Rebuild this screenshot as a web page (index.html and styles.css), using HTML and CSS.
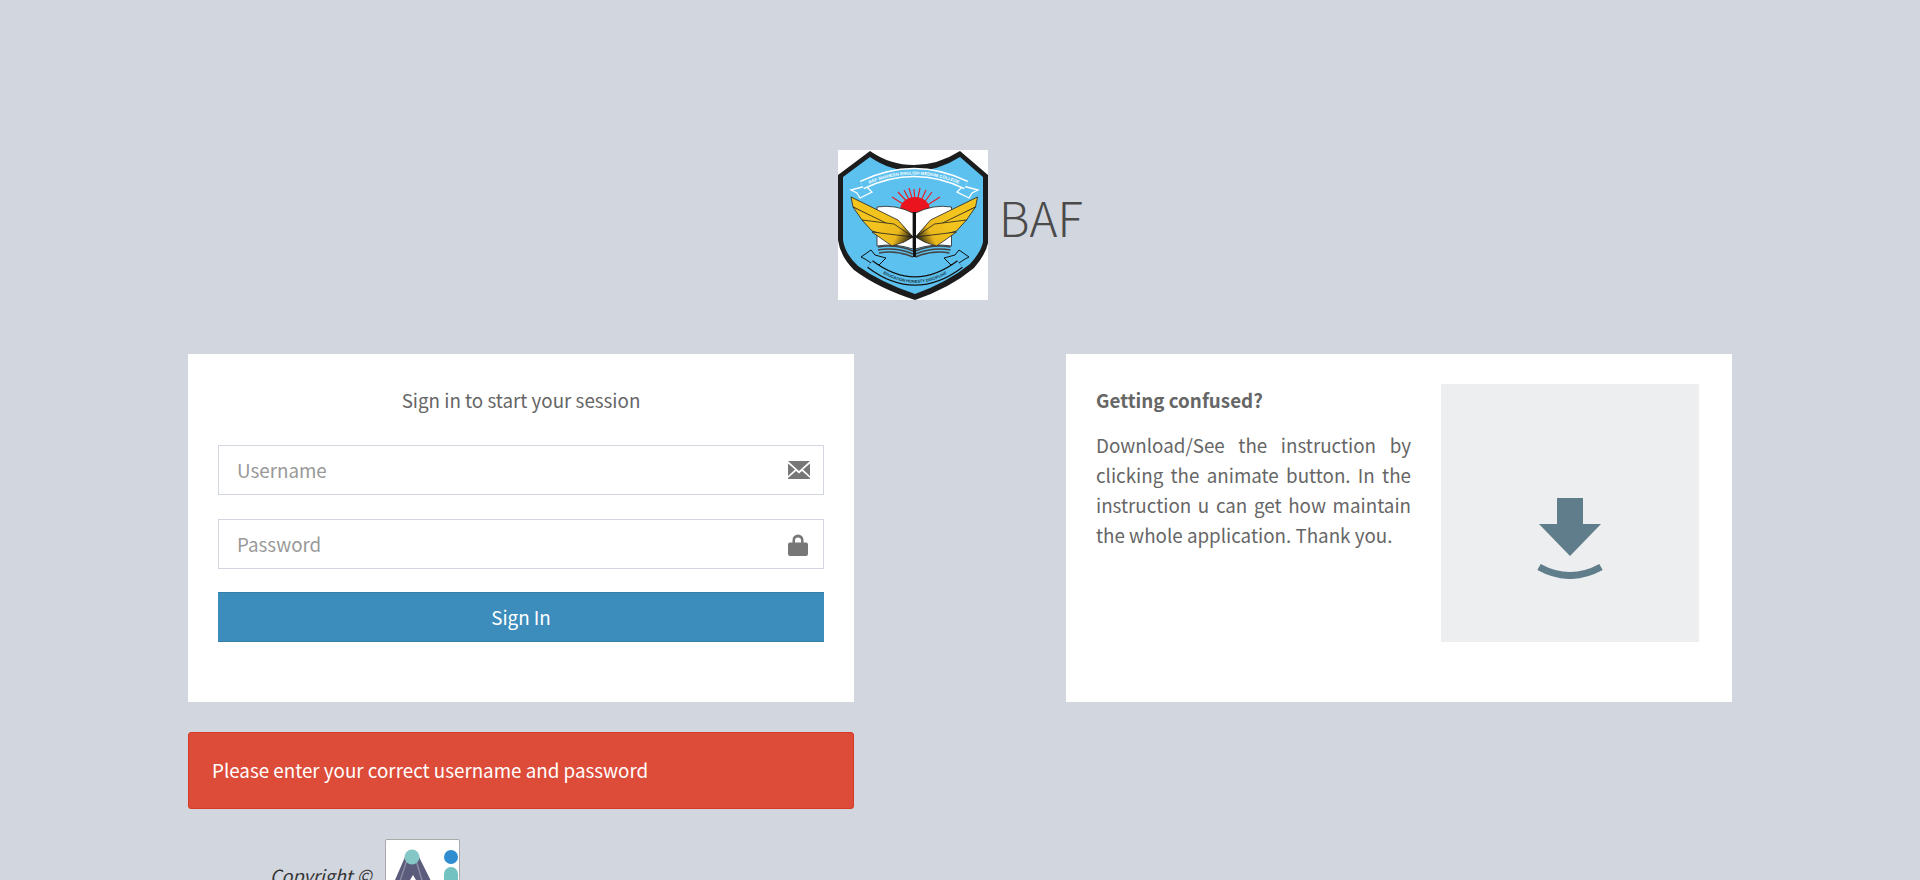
FILE: index.html
```html
<!DOCTYPE html>
<html lang="en">
<head>
<meta charset="utf-8">
<title>BAF Login</title>
<link rel="stylesheet" href="styles.css">
</head>
<body>
<div class="page">
  <header class="brand">
    <svg class="crest" viewBox="0 0 150 150" xmlns="http://www.w3.org/2000/svg" aria-label="BAF Shaheen crest">
      <defs>
        <linearGradient id="feather" gradientUnits="userSpaceOnUse" x1="40" y1="70" x2="75" y2="88">
          <stop offset="0" stop-color="#f4c41e"/>
          <stop offset=".6" stop-color="#eab81c"/>
          <stop offset="1" stop-color="#111"/>
        </linearGradient>
        <path id="arc1" d="M24 37 Q76 12 128 37"/>
        <path id="arc2" d="M33 115.500 Q77 150 121 115.500"/>
        <g id="wing">
          <path d="M13 47 L60 70 L75 87 L46 73 L15 57 Z" fill="url(#feather)" stroke="#222" stroke-width=".8"/>
          <path d="M15 57 L46 72 L75 87 L44 79 L24 70 Z" fill="url(#feather)" stroke="#222" stroke-width=".8"/>
          <path d="M24 70 L56 74 L75 87 L48 85 L34 81 Z" fill="url(#feather)" stroke="#222" stroke-width=".8"/>
          <path d="M34 82 L75 87 L66 92 L54 96 Z" fill="url(#feather)" stroke="#222" stroke-width=".8"/>
        </g>
        <g id="page">
          <path d="M39 57 Q57 54 75 63 V99 Q57 93 39 96 Z" fill="#fff" stroke="#222" stroke-width=".8"/>
          <path d="M40 97 Q58 94 75 101 M40 100 Q58 97 75 104 M41 103 Q58 100 75 107" fill="none" stroke="#444" stroke-width="1.500"/>
        </g>
        <g id="tail">
          <path d="M23 107 L33 100 L37 105 L48 108 L41 115 L33 113 L27 109 Z" fill="#5cc1ee" stroke="#111" stroke-width="1"/>
        </g>
        <g id="flag">
          <path d="M28 36 L13 40 L19 43 L22 48 L34 42 Z" fill="#5cc1ee" stroke="#fff" stroke-width="1.300"/>
        </g>
      </defs>
      <rect width="150" height="150" fill="#fff"/>
      <path d="M32 1 Q52 15 76 15 Q100 15 122 1 L150 25 L150 93 Q148 104 136 118 Q112 138 77 150 Q40 138 16 120 Q2 106 0 90 L0 25 Z" fill="#1c1c1c"/>
      <path d="M32 7 Q52 21 76 21 Q100 21 122 7 L145 27 L145 92 Q143 102 132 114 Q110 132 77 144 Q42 132 20 116 Q7 104 5 90 L5 27 Z" fill="#5cc1ee"/>
      <use href="#flag"/>
      <use href="#flag" transform="translate(153 0) scale(-1 1)"/>
      <path d="M24 35 Q76 10 128 35" fill="none" stroke="#fff" stroke-width="9.500"/>
      <path d="M24 35 Q76 10 128 35" fill="none" stroke="#5cc1ee" stroke-width="6.500"/>
      <text class="crest-text"><textPath href="#arc1" startOffset="50%" text-anchor="middle">BAF SHAHEEN ENGLISH MEDIUM COLLEGE</textPath></text>
      <path d="M54 47 L68 56 M60 42 L71 54 M66 40 L73 53 M71 38 L75 52 M76 39 L77 52 M82 38 L79 52 M88 40 L82 53 M94 42 L85 54 M102 47 L88 56" stroke="#e5202a" stroke-width="1.200" fill="none"/>
      <path d="M62 60 A15 13 0 0 1 92 60 L77 64 Z" fill="#e9141e"/>
      <use href="#page"/>
      <use href="#page" transform="translate(152.500 0) scale(-1 1)"/>
      <rect x="75" y="62" width="3" height="45" fill="#111"/>
      <use href="#wing"/>
      <use href="#wing" transform="translate(152.500 0) scale(-1 1)"/>
      <use href="#tail"/>
      <use href="#tail" transform="translate(154 0) scale(-1 1)"/>
      <path d="M32 114 Q77 148 122 114" fill="none" stroke="#111" stroke-width="9.500"/>
      <path d="M32 114 Q77 148 122 114" fill="none" stroke="#5cc1ee" stroke-width="7"/>
      <text class="crest-text crest-text-dark"><textPath href="#arc2" startOffset="50%" text-anchor="middle">EDUCATION HONESTY DISCIPLINE</textPath></text>
    </svg>
    <span class="brand-name">BAF</span>
  </header>
  <main class="columns">
    <div class="col">
      <section class="card">
        <p class="card-title">Sign in to start your session</p>
        <form class="form">
          <label class="field">
            <input class="input" type="text" placeholder="Username">
            <svg class="field-icon" viewBox="0 0 22 18" xmlns="http://www.w3.org/2000/svg"><path d="M0 0H22L11 10Z M0 2.500V15L7 8.500Z M22 2.500V15L15 8.500Z M0 18V17L8 10L11 12.500L14 10L22 17V18Z" fill="#777"/></svg>
          </label>
          <label class="field">
            <input class="input" type="password" placeholder="Password">
            <svg class="field-icon field-icon-lock" viewBox="0 0 20 22" xmlns="http://www.w3.org/2000/svg"><path d="M4.500 9V6A5.500 5.500 0 0 1 15.500 6V9H13V6.500A3 3 0 0 0 7 6.500V9Z M2 8.500H18Q20 8.500 20 10.500V20Q20 22 18 22H2Q0 22 0 20V10.500Q0 8.500 2 8.500Z" fill="#777"/></svg>
          </label>
          <button class="submit" type="button">Sign In</button>
        </form>
      </section>
      <div class="alert">Please enter your correct username and password</div>
      <footer class="copyright">
        <span class="copyright-text">Copyright ©</span>
        <span class="vendor">
          <svg class="vendor-logo" viewBox="0 0 73 73" xmlns="http://www.w3.org/2000/svg">
            <path d="M6 47 L19 17 H33 L48 47 Z" fill="#5b5b7c"/>
            <path d="M21 20 L12 47 M30 20 L38 47" stroke="#8a8aa3" stroke-width="1.500" fill="none"/>
            <path d="M27 35 L21 45 H33 Z" fill="#fff"/>
            <circle cx="26" cy="17" r="7.500" fill="#85c6c7"/>
            <circle cx="65" cy="17" r="7" fill="#2f8dd0"/>
            <path d="M58 41 V34 A7 7 0 0 1 72 34 V41 Z" fill="#72c2c2"/>
            <rect x="58" y="41" width="14" height="10" fill="#3d4670"/>
          </svg>
        </span>
      </footer>
    </div>
    <aside class="col">
      <section class="card card-help">
        <div class="help-text">
          <h4 class="help-title">Getting confused?</h4>
          <p class="help-body">Download/See the instruction by clicking the animate button. In the instruction u can get how maintain the whole application. Thank you.</p>
        </div>
        <div class="download">
          <svg class="download-icon" viewBox="0 0 66 81" xmlns="http://www.w3.org/2000/svg">
            <path d="M20 0H46V26H64L33 58L2 26H20Z" fill="#607d8b"/>
            <path d="M2 69Q33 86 64 69" fill="none" stroke="#607d8b" stroke-width="7"/>
          </svg>
        </div>
      </section>
    </aside>
  </main>
</div>
</body>
</html>
```
FILE: styles.css
```css
* { box-sizing: border-box; }
html, body { margin: 0; height: 880px; overflow: hidden; }
body {
  background: #d2d6de;
  color: #666;
  font-family: "Noto Sans CJK SC", "Source Sans Pro", "Noto Sans", sans-serif;
  font-size: 18.800px;
}
.page { padding-top: 150px; }
.brand {
  display: flex;
  justify-content: center;
  align-items: center;
  gap: 11px;
  height: 150px;
  margin-bottom: 54px;
}
.crest { width: 150px; height: 150px; display: block; }
.crest-text { font-family: "Liberation Sans", sans-serif; font-size: 4.300px; font-weight: 700; fill: #fff; }
.crest-text-dark { fill: #16303c; font-size: 4px; }
.brand-name { font-size: 47.500px; font-weight: 300; color: #4a4a4a; line-height: 1; width: 83px; margin-bottom: 16px; }
.columns { display: flex; gap: 212px; padding-left: 188px; }
.col { width: 666px; }
.card { background: #fff; height: 348px; padding: 30px; }
.card-title { margin: 0; text-align: center; line-height: 32px; height: 32px; }
.form { margin-top: 29px; display: flex; flex-direction: column; gap: 24px; }
.field { position: relative; display: block; height: 50px; }
.input {
  width: 100%;
  height: 100%;
  border: 1px solid #d2d6de;
  padding: 0 18px 2px;
  background: #fff;
  font: inherit;
  color: #555;
  outline: none;
  border-radius: 0;
}
.input::placeholder { color: #999; opacity: 1; }
.field-icon { position: absolute; right: 14px; top: 16px; width: 22px; height: 18px; }
.field-icon-lock { right: 16px; top: 15px; width: 20px; height: 22px; }
.submit {
  height: 50px;
  margin-top: -1px;
  background: #3c8dbc;
  border: 1px solid #367fa9;
  border-width: 1px 0;
  color: #fff;
  font: inherit;
  padding: 0 0 2px;
}
.alert {
  margin-top: 30px;
  height: 77px;
  background: #dd4b39;
  border: 1px solid #d73925;
  border-radius: 3px;
  color: #fff;
  line-height: 73px;
  padding-left: 23px;
}
.copyright { display: flex; align-items: flex-start; margin-top: 30px; padding-left: 83px; gap: 12px; }
.copyright-text { font-style: italic; font-size: 18px; color: #333; margin-top: 20px; line-height: 32px; width: 102px; white-space: nowrap; margin-left: -1px; }
.vendor { display: block; width: 75px; height: 75px; background: #fff; border: 1px solid #aaa; border-radius: 2px; flex: none; margin-left: 1px; }
.vendor-logo { display: block; width: 73px; height: 73px; }
.card-help { display: flex; justify-content: space-between; }
.help-text { width: 315px; }
.help-title { margin: 0; line-height: 32px; font-size: inherit; font-weight: 700; }
.help-body { margin: 14px 0 0; line-height: 30px; text-align: justify; }
.download { width: 258px; height: 258px; margin-right: 3px; background: #edeef0; display: flex; justify-content: center; align-items: center; }
.download-icon { width: 66px; height: 81px; margin-top: 50px; }
```
